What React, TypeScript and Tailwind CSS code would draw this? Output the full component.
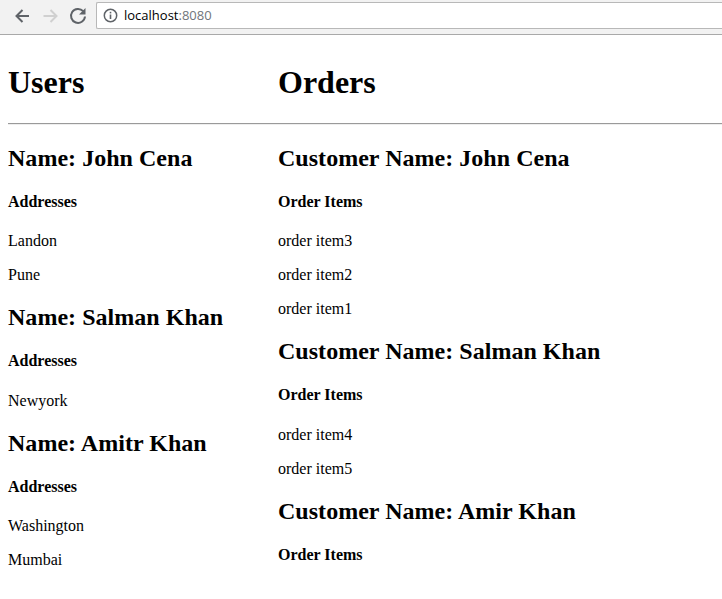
const users = [
  { name: "John Cena", items: ["Landon", "Pune"] },
  { name: "Salman Khan", items: ["Newyork"] },
  { name: "Amitr Khan", items: ["Washington", "Mumbai"] },
];
const orders = [
  { name: "John Cena", items: ["order item3", "order item2", "order item1"] },
  { name: "Salman Khan", items: ["order item4", "order item5"] },
  { name: "Amir Khan", items: [] as string[] },
];

function Column({
  title,
  prefix,
  sub,
  data,
  className,
}: {
  title: string;
  prefix: string;
  sub: string;
  data: { name: string; items: string[] }[];
  className: string;
}) {
  return (
    <div className={className}>
      <h1 className="text-[32px] font-bold leading-[37px] my-[21.44px]">{title}</h1>
      <hr className="h-[2px] border-0 border-t border-b border-t-[#9a9a9a] border-b-[#eeeeee]" />
      {data.map((d) => (
        <div key={d.name}>
          <h2 className="text-[24px] font-bold leading-[27px] mt-[19.92px] mb-[19.92px] tracking-[0.03px]">
            {prefix} {d.name}
          </h2>
          <h4 className="text-[16px] font-bold leading-[18px] my-[21.28px]">{sub}</h4>
          {d.items.map((i) => (
            <p key={i} className="text-[16px] leading-[18px] my-4">
              {i}
            </p>
          ))}
        </div>
      ))}
    </div>
  );
}

export default function App() {
  return (
    <div className="h-[599px] overflow-hidden bg-white text-black font-['Liberation_Serif',serif]">
      <div className="h-[35px] bg-[#f2f2f2] border-b border-[#a9a9a9] flex items-start pt-[2px] font-['Open_Sans',sans-serif]">
        <div className="w-[96px] flex items-center h-[27px] shrink-0">
          <svg width="96" height="27" viewBox="0 0 96 27" fill="none">
            <path d="M29 14H17M22.5 8l-6 6 6 6" stroke="#5f6368" strokeWidth="2" />
            <path d="M43.5 14H56M50.5 8l6 6-6 6" stroke="#d0d0d0" strokeWidth="2" />
            <path d="M83.2 9.2A7 7 0 1 0 85 14.5" stroke="#5f6368" strokeWidth="2" />
            <path d="M85.5 6v6.5H79z" fill="#5f6368" />
          </svg>
        </div>
        <div className="flex-1 h-[27px] bg-white border border-[#b8b8b8] border-r-0 rounded-l-[2px] flex items-center pl-[6px] gap-[6px]">
          <svg width="15" height="15" viewBox="0 0 15 15" fill="none">
            <circle cx="7.5" cy="7.5" r="6.2" stroke="#5f6368" strokeWidth="1.5" />
            <path d="M7.5 6.5v4.5" stroke="#5f6368" strokeWidth="1.6" />
            <path d="M7.5 3.8v1.6" stroke="#5f6368" strokeWidth="1.6" />
          </svg>
          <span className="text-[13px] text-black">
            localhost<span className="text-[#70757a]">:8080</span>
          </span>
        </div>
      </div>
      <div className="flex px-2 pt-2">
        <Column title="Users" prefix="Name:" sub="Addresses" data={users} className="w-[270px] shrink-0" />
        <Column title="Orders" prefix="Customer Name:" sub="Order Items" data={orders} className="flex-1 -mr-2" />
      </div>
    </div>
  );
}
